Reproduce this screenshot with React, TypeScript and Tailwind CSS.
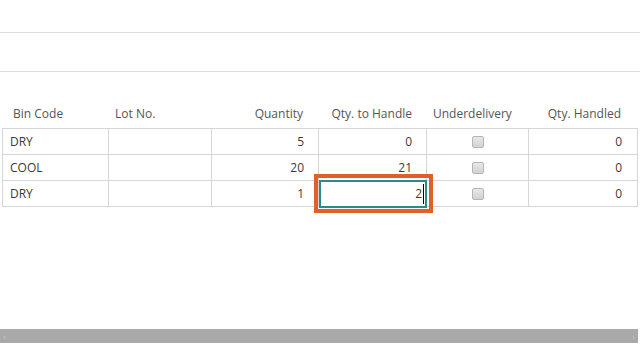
const cols = 'grid grid-cols-[106px_103px_107px_108px_102px_109px]';

type Row = { bin: string; lot: string; qty: string; toHandle: string; handled: string };

const rows: Row[] = [
  { bin: 'DRY', lot: '', qty: '5', toHandle: '0', handled: '0' },
  { bin: 'COOL', lot: '', qty: '20', toHandle: '21', handled: '0' },
  { bin: 'DRY', lot: '', qty: '1', toHandle: '2', handled: '0' },
];

function Checkbox() {
  return (
    <span className="block h-[12px] w-[12px] rounded-[2px] border border-[#b5b5b5] bg-gradient-to-b from-[#e8e8e8] to-[#d2d2d2]" />
  );
}

export default function App() {
  return (
    <div
      className="relative h-[360px] w-[640px] overflow-hidden bg-white text-[12px] text-[#3a3a3a]"
      style={{ fontFamily: '"Open Sans", "Noto Sans", sans-serif' }}
    >
      {/* Top bands */}
      <div className="h-[32px]" />
      <div className="h-[39px] border-t border-[#dcdcdc]" />
      <div className="h-[29px] border-t border-[#dcdcdc]" />

      {/* Header */}
      <div className={`${cols} ml-[3px] h-[28px] items-center text-[#555]`}>
        <div className="pl-[10px]">Bin Code</div>
        <div className="pl-[6px]">Lot No.</div>
        <div className="pr-[16px] text-right">Quantity</div>
        <div className="pr-[15px] text-right">Qty. to Handle</div>
        <div className="pl-[6px]">Underdelivery</div>
        <div className="pr-[17px] text-right">Qty. Handled</div>
      </div>

      {/* Rows */}
      <div className="ml-[2px] w-[636px] border-l border-t border-[#d6d6d6]">
        {rows.map((r, i) => (
          <div key={i} className={`${cols} h-[26px]`}>
            <div className="flex items-center border-b border-r border-[#d6d6d6] pl-[7px]">{r.bin}</div>
            <div className="border-b border-r border-[#d6d6d6]">{r.lot}</div>
            <div className="flex items-center justify-end border-b border-r border-[#d6d6d6] pr-[14px]">{r.qty}</div>
            <div className="relative flex items-center justify-end border-b border-r border-[#d6d6d6] pr-[14px]">
              {i === 2 ? (
                <>
                  <div className="absolute left-[-5px] top-[-7px] h-[39px] w-[119px] border-[4px] border-[#e0602a]" />
                  <div className="absolute left-0 top-[-1px] flex h-[28px] w-[108px] items-center justify-end border-[2px] border-[#2b8a8a] bg-white pr-[1px]">
                    <span>{r.toHandle}</span>
                    <span className="ml-px h-[20px] w-px bg-black" />
                  </div>
                </>
              ) : (
                r.toHandle
              )}
            </div>
            <div className="flex items-center justify-center border-b border-r border-[#d6d6d6]">
              <Checkbox />
            </div>
            <div className="flex items-center justify-end border-b border-r border-[#d6d6d6] pr-[15px]">{r.handled}</div>
          </div>
        ))}
      </div>

      {/* Horizontal scrollbar */}
      <div className="absolute left-0 top-[329px] flex h-[14px] w-[638px] items-center justify-between bg-[#a9a9a9] px-[3px] text-[9px] leading-none text-[#c4c4c4]">
        <span>‹</span>
        <span>›</span>
      </div>
    </div>
  );
}
